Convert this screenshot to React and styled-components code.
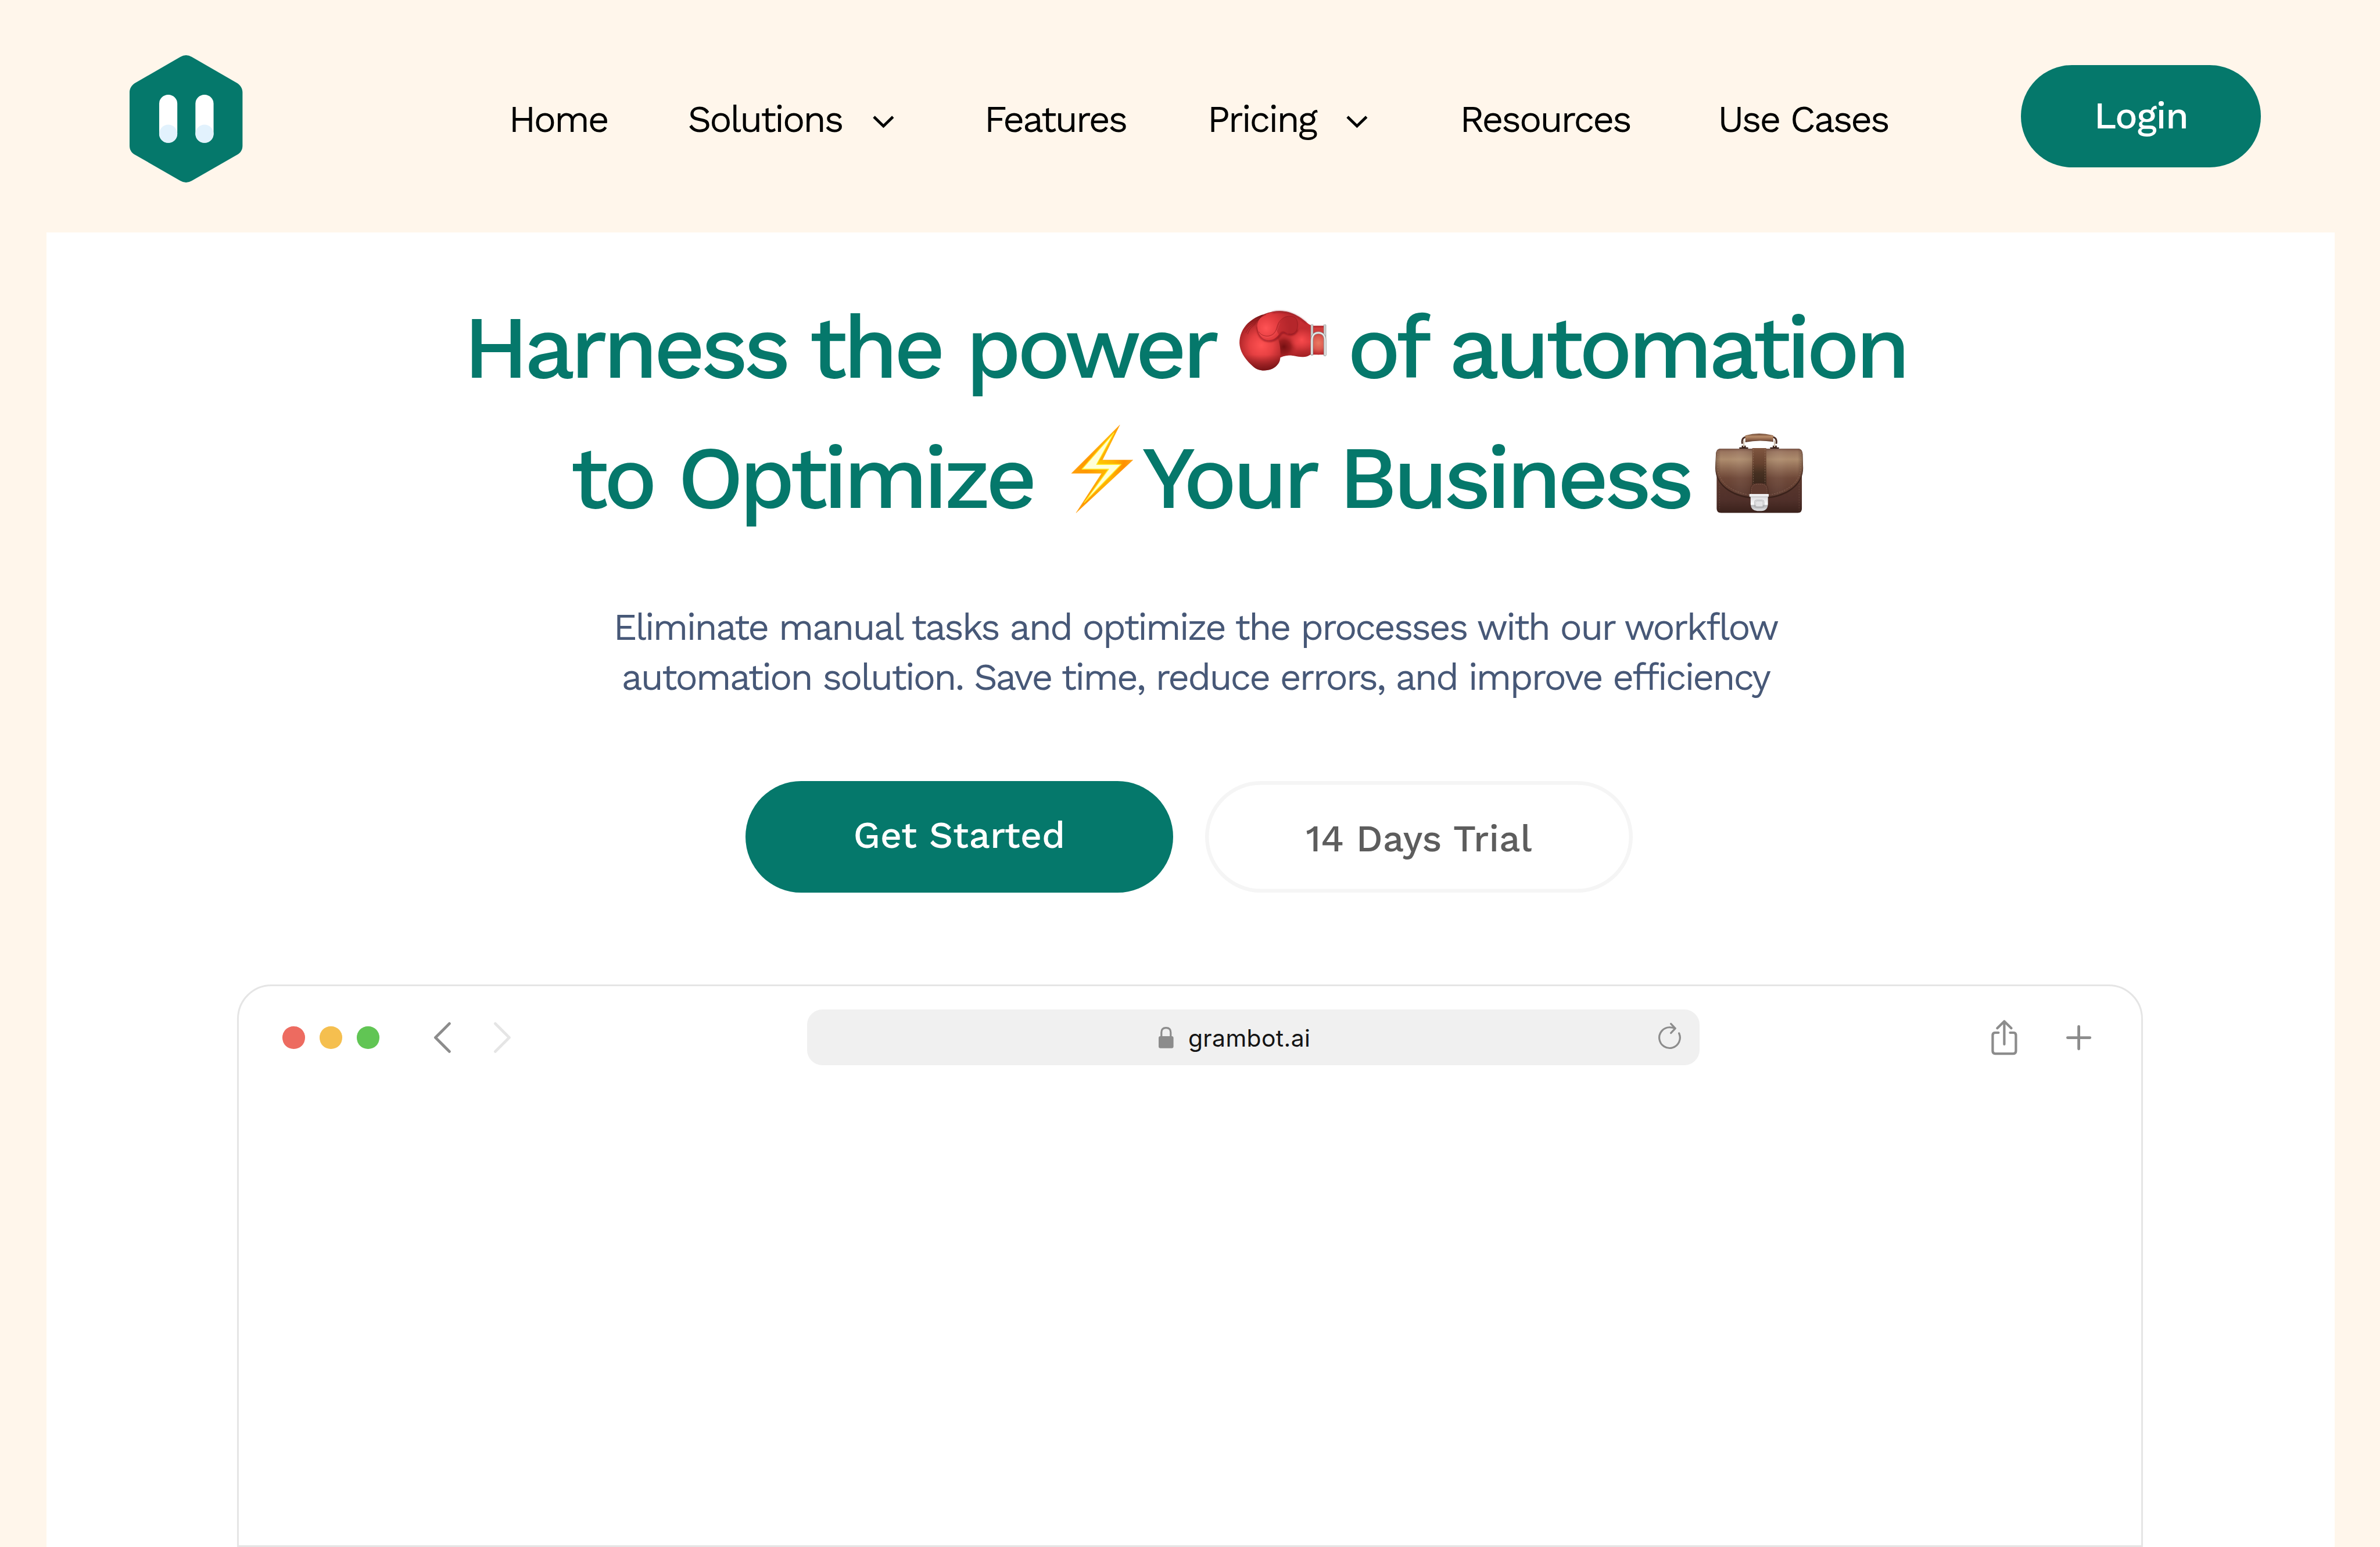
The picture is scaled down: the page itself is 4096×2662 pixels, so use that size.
import React from "react";
import styled, { createGlobalStyle } from "styled-components";

/* The design is drawn on a 5120px artboard and rendered at 80%. */
const u = (n) => `${+(n * 0.8).toFixed(2)}px`;

const color = {
  green: "#05786b",
  cream: "#fff6eb",
  slate: "#475877",
  icon: "#8c8c8c",
  line: "#e5e5e5",
};

const GlobalStyle = createGlobalStyle`
  *, *::before, *::after { box-sizing: border-box; }
  html, body { margin: 0; padding: 0; }
  body {
    background: ${color.cream};
    font-family: "Work Sans", Inter, "Liberation Sans", sans-serif;
    overflow: hidden;
  }
  svg { display: block; flex: none; overflow: visible; }
`;

const Page = styled.div`
  display: flex;
  flex-direction: column;
  width: ${u(5120)};
  height: 2662px;
  background: ${color.cream};
  overflow: hidden;
`;

const Header = styled.header`
  display: flex;
  flex: none;
  align-items: flex-start;
  height: ${u(500)};
  padding: ${u(119)} ${u(256)} 0 ${u(278.7)};
`;

const LogoLink = styled.a`
  display: block;
  flex: none;
  width: ${u(243)};
  height: ${u(274)};
`;

const Nav = styled.nav`
  display: grid;
  grid-template-columns: ${u(385)} ${u(638)} ${u(480)} ${u(543)} ${u(555)} auto;
  margin: ${u(87.5)} 0 0 ${u(572.6)};
`;

const NavLink = styled.a`
  display: flex;
  align-items: center;
  gap: ${u(66)};
  color: #000;
  font-size: ${u(80)};
  line-height: ${u(100)};
  letter-spacing: -0.049em;
  white-space: nowrap;

  svg { margin-top: ${u(11)}; }
`;

const LoginButton = styled.button`
  flex: none;
  width: ${u(516)};
  height: ${u(220)};
  margin: ${u(21)} 0 0 auto;
  padding: 0 0 ${u(3)};
  border: 0;
  border-radius: ${u(110)};
  background: ${color.green};
  color: #fff;
  font: 500 ${u(80)} / 1 "Work Sans", Inter, sans-serif;
  letter-spacing: -0.018em;
`;

const Panel = styled.main`
  display: flex;
  flex: 1;
  flex-direction: column;
  align-items: center;
  min-height: 0;
  margin: 0 ${u(97.5)} 0 ${u(100)};
  padding: ${u(106)} ${u(2.5)} 0 0;
  background: #fff;
`;

const Headline = styled.h1`
  display: flex;
  flex-direction: column;
  align-self: stretch;
  margin: 0;
  color: ${color.green};
  font-size: ${u(192)};
  font-weight: 500;
  line-height: ${u(280)};
  letter-spacing: -0.05em;
`;

const HeadlineRow = styled.span`
  display: grid;
  grid-template-columns: ${(p) => p.$columns.map(u).join(" ")} auto;
  height: ${u(280)};
  padding-left: ${(p) => u(p.$indent)};
  white-space: nowrap;
`;

const Emoji = styled.span`
  display: block;
  padding-top: ${(p) => u(p.$drop)};
`;

const Lead = styled.p`
  margin: ${u(128.5)} 0 0 ${u(23)};
  color: ${color.slate};
  font-size: ${u(80)};
  line-height: ${u(108)};
  letter-spacing: -0.049em;
  text-align: center;
  white-space: nowrap;
`;

const Actions = styled.div`
  display: flex;
  gap: ${u(69)};
  margin: ${u(169.5)} ${u(4)} 0 0;
`;

const ActionButton = styled.button`
  width: ${u(920)};
  height: ${u(240)};
  padding: ${(p) => (p.$outline ? `${u(8)} 0 0` : `0 0 ${u(8)}`)};
  border: 0;
  border-radius: ${u(120)};
  background: ${(p) => (p.$outline ? "#fff" : color.green)};
  box-shadow: ${(p) => (p.$outline ? `inset 0 0 0 ${u(8)} #f5f5f5` : "none")};
  color: ${(p) => (p.$outline ? "#5d5d5d" : "#fff")};
  font: 500 ${u(80)} / 1 "Work Sans", Inter, sans-serif;
`;

const Browser = styled.section`
  flex: 1;
  width: ${u(4100)};
  margin-top: ${u(198)};
  border: ${u(4)} solid ${color.line};
  border-radius: ${u(74)} ${u(74)} 0 0;
  background: #fff;
`;

const Toolbar = styled.div`
  display: flex;
  align-items: center;
  height: ${u(220)};
  padding: 0 ${u(107)} 0 ${u(94)};
`;

const Lights = styled.div`
  display: flex;
  gap: ${u(32)};
`;

const Light = styled.i`
  width: ${u(48)};
  height: ${u(48)};
  border-radius: 50%;
  background: ${(p) => p.$tone};
`;

const History = styled.div`
  display: flex;
  gap: ${u(92)};
  margin-left: ${u(118.5)};
`;

const AddressBar = styled.div`
  display: flex;
  align-items: center;
  width: ${u(1920)};
  height: ${u(120)};
  margin-left: ${u(638)};
  padding: 0 ${u(40)} 0 ${u(756)};
  border-radius: ${u(33)};
  background: #f0f0f0;
`;

const Address = styled.span`
  margin-left: ${u(32)};
  padding-top: ${u(3)};
  color: #141414;
  font: 400 ${u(51)} / 1.2 Inter, "Liberation Sans", sans-serif;
  letter-spacing: ${u(0.5)};
`;

const ReloadSlot = styled.span`
  margin: 0 0 ${u(8)} auto;
`;

const Tools = styled.div`
  display: flex;
  align-items: center;
  gap: ${u(105)};
  margin-left: auto;
`;

function Logo() {
  return (
    <svg width={u(243)} height={u(274)} viewBox="0 0 243 274">
      <path
        fill={color.green}
        d="M109 3.7Q121.5-3.7 134 3.7L232 60.3C239 65 243 72 243 80V195C243 203 239 210 232 213.7L134 270Q121.5 277.4 109 270L11 213.7C4 210 0 203 0 195V80C0 72 4 65 11 60.3Z"
      />
      <rect x="63.7" y="85" width="39" height="103.6" rx="19.5" fill="#fff" />
      <rect x="141.7" y="85" width="39" height="103.6" rx="19.5" fill="#fff" />
      <circle cx="83.2" cy="169" r="19.5" fill="#e2f2fd" />
      <circle cx="161.2" cy="169" r="19.5" fill="#e2f2fd" />
    </svg>
  );
}

function ChevronDown() {
  return (
    <svg width={u(46)} height={u(27)} viewBox="0 0 46 27">
      <path d="M2.5 2.5 23 22.5 43.5 2.5" fill="none" stroke="#000" strokeWidth="6" />
    </svg>
  );
}

function Glove() {
  return (
    <svg width={u(187.7)} height={u(129)} viewBox="78 88 563 387">
      <defs>
        <radialGradient id="gFist" gradientUnits="userSpaceOnUse" cx="220" cy="310" r="190">
          <stop offset="0" stopColor="#ff5252" />
          <stop offset=".4" stopColor="#e64042" />
          <stop offset=".75" stopColor="#b3282b" />
          <stop offset="1" stopColor="#7d1719" />
        </radialGradient>
        <linearGradient id="gFistBase" gradientUnits="userSpaceOnUse" x1="0" y1="370" x2="0" y2="475">
          <stop offset="0" stopColor="#6d1013" stopOpacity="0" />
          <stop offset="1" stopColor="#6d1013" stopOpacity=".75" />
        </linearGradient>
        <linearGradient id="gHand" gradientUnits="userSpaceOnUse" x1="400" y1="90" x2="430" y2="390">
          <stop offset="0" stopColor="#8f1c20" />
          <stop offset=".14" stopColor="#cb2f33" />
          <stop offset=".4" stopColor="#c22c30" />
          <stop offset=".7" stopColor="#df3b3e" />
          <stop offset="1" stopColor="#a12023" />
        </linearGradient>
        <radialGradient id="gThumb" gradientUnits="userSpaceOnUse" cx="250" cy="200" r="150">
          <stop offset="0" stopColor="#ff5355" />
          <stop offset=".55" stopColor="#e13b3e" />
          <stop offset="1" stopColor="#c02d31" />
        </radialGradient>
        <radialGradient id="gPalm" gradientUnits="userSpaceOnUse" cx="365" cy="320" r="85">
          <stop offset="0" stopColor="#740f11" />
          <stop offset=".5" stopColor="#8c1719" stopOpacity=".8" />
          <stop offset="1" stopColor="#b3272b" stopOpacity="0" />
        </radialGradient>
        <radialGradient id="gHeel" gradientUnits="userSpaceOnUse" cx="480" cy="275" r="75">
          <stop offset="0" stopColor="#fa4b4d" />
          <stop offset="1" stopColor="#e33e41" stopOpacity="0" />
        </radialGradient>
        <radialGradient id="gCuff" gradientUnits="userSpaceOnUse" cx="588" cy="295" r="75">
          <stop offset="0" stopColor="#ea7a62" />
          <stop offset=".55" stopColor="#dc5a50" />
          <stop offset="1" stopColor="#b8272b" />
        </radialGradient>
        <linearGradient id="gTrim" x1="0" x2="1" y1="0" y2="0">
          <stop offset="0" stopColor="#8d8f8e" />
          <stop offset=".5" stopColor="#e6e8e7" />
          <stop offset="1" stopColor="#8d8f8e" />
        </linearGradient>
        <filter id="gSoft" x="-30%" y="-30%" width="160%" height="160%">
          <feGaussianBlur stdDeviation="5" />
        </filter>
      </defs>
      <path
        fill="url(#gHand)"
        d="M240 108C300 84 360 84 410 101C445 112 480 134 506 157C520 169 533 178 546 182V366C530 372 522 384 500 384C450 389 420 370 390 376C370 377 355 383 343 389L250 300Z"
      />
      <path fill="url(#gPalm)" d="M300 240H460V383C430 384 420 370 390 376C370 377 355 383 343 389L290 320Z" />
      <circle cx="480" cy="275" r="75" fill="url(#gHeel)" />
      <path
        fill="url(#gFist)"
        d="M262 105C205 111 150 146 120 181C88 219 74 268 80 312C88 365 125 410 165 445C190 470 225 476 262 470C300 464 330 438 339 408C347 380 344 300 325 262L280 170Z"
      />
      <path
        fill="url(#gFistBase)"
        d="M102 370C118 402 143 426 165 445C190 470 225 476 262 470C300 464 330 438 339 408C342 396 343 384 343 370Z"
      />
      <path
        d="M196 190C196 240 218 278 262 282C300 285 322 268 340 244C352 226 362 222 380 234C410 250 440 240 452 208"
        fill="none"
        stroke="#66090c"
        strokeOpacity=".6"
        strokeWidth="10"
        filter="url(#gSoft)"
      />
      <path
        fill="url(#gThumb)"
        d="M262 104C220 115 195 148 193 184C194 220 208 262 250 274C290 282 318 262 333 238C345 216 360 212 380 228C408 246 438 238 449 212C462 180 480 160 462 130C445 115 430 108 410 101C360 84 300 88 262 104Z"
      />
      <path
        d="M318 215C322 180 342 140 376 127C402 120 432 124 444 140C456 156 458 186 448 210C438 236 412 246 384 231C362 216 346 214 332 240Z"
        fill="#a92025"
        fillOpacity=".5"
      />
      <path
        d="M203 222C218 250 262 260 292 240C322 218 316 188 334 160C352 134 378 122 404 122C430 124 442 132 448 146C456 166 456 192 448 210C438 232 418 242 396 236"
        fill="none"
        stroke="#861619"
        strokeOpacity=".75"
        strokeWidth="3"
      />
      <path
        d="M206 232C228 262 270 266 300 246C326 222 324 194 340 166"
        fill="none"
        stroke="#ff7a7a"
        strokeOpacity=".35"
        strokeWidth="2.5"
      />
      <g fill="none" stroke="#6d1013" strokeOpacity=".5" strokeWidth="3.5" strokeLinecap="round">
        <path d="M250 112C215 128 200 142 192 152" />
        <path d="M192 151C170 150 150 160 132 172" />
        <path d="M188 158C160 166 130 182 112 208" />
        <path d="M184 166C155 180 132 200 120 228" />
        <path d="M180 174C150 196 138 214 132 236" />
      </g>
      <path
        d="M290 98C330 90 376 92 412 106C450 118 486 146 510 166"
        fill="none"
        stroke="#7c191d"
        strokeOpacity=".6"
        strokeWidth="9"
        filter="url(#gSoft)"
      />
      <path fill="#b5262a" d="M550 184H628V370H550Z" />
      <path fill="#cf3d3c" d="M556 194H622V226H556Z" />
      <path fill="url(#gCuff)" d="M553 366V275C555 240 570 232 588 232C608 232 622 244 624 275V366Q588 374 553 366Z" />
      <rect x="538" y="172" width="17" height="206" rx="8" fill="url(#gTrim)" />
      <rect x="621" y="173" width="17" height="208" rx="8" fill="url(#gTrim)" />
      <path
        d="M546 366V280C546 242 566 229 588 229C612 229 631 244 631 280V372"
        fill="none"
        stroke="#9a9c9b"
        strokeWidth="16"
        strokeLinecap="round"
      />
      <path
        d="M546 366V280C546 242 566 229 588 229C612 229 631 244 631 280V372"
        fill="none"
        stroke="#eceeed"
        strokeWidth="9"
        strokeLinecap="round"
      />
    </svg>
  );
}

function Bolt() {
  return (
    <svg width={u(132.3)} height={u(189.3)} viewBox="76 43 397 568">
      <defs>
        <linearGradient id="bEdge" gradientUnits="userSpaceOnUse" x1="76" y1="0" x2="473" y2="0">
          <stop offset="0" stopColor="#ffa00a" />
          <stop offset=".25" stopColor="#ff9800" />
          <stop offset=".5" stopColor="#ffb000" />
          <stop offset=".62" stopColor="#ffb400" />
          <stop offset=".85" stopColor="#ff8f00" />
          <stop offset="1" stopColor="#ffa61a" />
        </linearGradient>
        <linearGradient id="bStep" gradientUnits="userSpaceOnUse" x1="240" y1="0" x2="450" y2="0">
          <stop offset="0" stopColor="#ffc800" />
          <stop offset=".5" stopColor="#ffb400" />
          <stop offset="1" stopColor="#ff8f00" stopOpacity="0" />
        </linearGradient>
      </defs>
      <path
        d="M388 44 276 270H473L106 611 271 356H76Z"
        fill="url(#bEdge)"
        stroke="#ffa51c"
        strokeWidth="2"
        strokeLinejoin="round"
      />
      <path d="M262 272 236 300H400L430 274Z" fill="url(#bStep)" />
      <path
        d="M350 95 238 299H396L158 545 316 329H144Z"
        fill="#ffffd9"
        stroke="#ffef2a"
        strokeWidth="5"
        strokeLinejoin="round"
      />
    </svg>
  );
}

function Briefcase() {
  return (
    <svg width={u(189)} height={u(170.7)} viewBox="91 68 567 512">
      <defs>
        <linearGradient id="cBody" x1="0" x2="0" y1="0" y2="1">
          <stop offset="0" stopColor="#5f3b2f" />
          <stop offset=".7" stopColor="#50302a" />
          <stop offset="1" stopColor="#3a211b" />
        </linearGradient>
        <linearGradient id="cFlap" x1="0" x2="0" y1="0" y2="1">
          <stop offset="0" stopColor="#7d5647" />
          <stop offset=".06" stopColor="#9a755f" />
          <stop offset=".22" stopColor="#ae8c6d" />
          <stop offset=".4" stopColor="#8f6a53" />
          <stop offset=".6" stopColor="#6f4838" />
          <stop offset="1" stopColor="#57352b" />
        </linearGradient>
        <linearGradient id="cShade" x1="0" x2="1" y1="0" y2="0">
          <stop offset="0" stopColor="#2c1510" stopOpacity=".3" />
          <stop offset=".06" stopColor="#2c1510" stopOpacity="0" />
          <stop offset=".25" stopColor="#fff" stopOpacity=".04" />
          <stop offset=".42" stopColor="#2c1510" stopOpacity=".12" />
          <stop offset=".58" stopColor="#2c1510" stopOpacity=".12" />
          <stop offset=".75" stopColor="#fff" stopOpacity=".04" />
          <stop offset=".94" stopColor="#2c1510" stopOpacity="0" />
          <stop offset="1" stopColor="#2c1510" stopOpacity=".3" />
        </linearGradient>
        <linearGradient id="cStrap" x1="0" x2="0" y1="0" y2="1">
          <stop offset="0" stopColor="#805640" />
          <stop offset=".4" stopColor="#66422f" />
          <stop offset=".65" stopColor="#463021" />
          <stop offset="1" stopColor="#38251b" />
        </linearGradient>
        <linearGradient id="cGrip" x1="0" x2="0" y1="0" y2="1">
          <stop offset="0" stopColor="#6b4634" />
          <stop offset=".35" stopColor="#b98d6a" />
          <stop offset=".7" stopColor="#8b6048" />
          <stop offset="1" stopColor="#4f3024" />
        </linearGradient>
        <linearGradient id="cLock" x1="0" x2="0" y1="0" y2="1">
          <stop offset="0" stopColor="#dcdcde" />
          <stop offset=".55" stopColor="#fbfbfc" />
          <stop offset=".62" stopColor="#b4b5b8" />
          <stop offset="1" stopColor="#e4e4e6" />
        </linearGradient>
      </defs>
      <path d="M246 157H303V166H246ZM445 157H502V166H445Z" fill="#3c241d" />
      <path d="M262 146H288V160H262ZM462 146H488V160H462Z" fill="#3c241d" />
      <path d="M290 90C268 92 260 112 266 134M460 90C482 92 490 112 484 134" fill="none" stroke="#4d3027" strokeWidth="11" />
      <path d="M275 116V150M474 116V150" stroke="#cdbfae" strokeWidth="9" strokeLinecap="round" />
      <path d="M285 80Q375 56 465 80V122Q375 106 285 124Z" fill="url(#cGrip)" />
      <path d="M297 80V120M453 80V120" stroke="#c7a182" strokeOpacity=".6" strokeWidth="2" strokeDasharray="6 5" />
      <path d="M100 300H650V552Q650 580 624 580H128Q100 580 100 552Z" fill="url(#cBody)" />
      <path d="M118 390V565M632 390V565" stroke="#8a6657" strokeOpacity=".55" strokeWidth="3" strokeDasharray="9 8" />
      <path
        d="M120 166H630Q652 168 655 200L658 290C658 410 540 490 375 490C210 490 91 410 91 290L95 200Q98 168 120 166Z"
        fill="#3a221b"
      />
      <path
        d="M120 166H630Q652 168 654 200L656 285C654 400 540 480 375 480C210 480 95 400 93 285L96 200Q98 168 120 166Z"
        fill="url(#cFlap)"
      />
      <path
        d="M120 166H630Q652 168 654 200L656 285C654 400 540 480 375 480C210 480 95 400 93 285L96 200Q98 168 120 166Z"
        fill="url(#cShade)"
      />
      <path
        d="M108 180V300C114 395 225 468 375 468C525 468 636 395 642 300V180"
        fill="none"
        stroke="#a88670"
        strokeOpacity=".65"
        strokeWidth="3"
        strokeDasharray="9 8"
      />
      <path d="M330 162H420V410H330Z" fill="url(#cStrap)" />
      <path d="M337 168V400M412 168V400" stroke="#a78570" strokeOpacity=".75" strokeWidth="3" strokeDasharray="9 8" />
      <path d="M318 462V430Q320 390 360 388H390Q428 390 431 430V462Z" fill="#5f3b30" stroke="#3a221b" strokeWidth="2" />
      <path
        d="M324 458V432Q326 397 360 395H390Q424 397 425 432V458"
        fill="none"
        stroke="#a78570"
        strokeOpacity=".6"
        strokeWidth="2.5"
        strokeDasharray="7 6"
      />
      <path d="M319 474H431V525Q428 568 388 568H362Q322 566 319 525Z" fill="url(#cLock)" />
      <rect x="311" y="458" width="125" height="18" rx="3" fill="#eeeeef" />
      <path d="M313 477H434" stroke="#9c9c9f" strokeWidth="2" />
      <rect x="344" y="497" width="62" height="50" rx="14" fill="none" stroke="#97989b" strokeWidth="2.5" />
      <rect x="351" y="503" width="48" height="37" rx="9" fill="#e3e3e5" stroke="#97989b" strokeWidth="2" />
    </svg>
  );
}

function HistoryArrow({ forward }) {
  return (
    <svg width={u(36)} height={u(66)} viewBox="0 0 36 66">
      <path
        d={forward ? "M3 3 33 33 3 63" : "M33 3 3 33 33 63"}
        fill="none"
        stroke={forward ? color.line : color.icon}
        strokeWidth="6"
        strokeLinecap="round"
        strokeLinejoin="round"
      />
    </svg>
  );
}

function Padlock() {
  return (
    <svg width={u(32)} height={u(46)} viewBox="0 0 32 46">
      <rect y="20" width="32" height="26" rx="4" fill={color.icon} />
      <path d="M6 21V12Q6 2 16 2T26 12V21" fill="none" stroke={color.icon} strokeWidth="4" />
    </svg>
  );
}

function Reload() {
  return (
    <svg width={u(49)} height={u(56)} viewBox="0 0 49 56">
      <g fill="none" stroke={color.icon} strokeWidth="4" strokeLinecap="round" strokeLinejoin="round">
        <path d="M44.5 22.5A22.3 22.3 0 1 1 24.5 9.7Q30 9.7 36 12" />
        <path d="M27 2 36.5 12 27 22" />
      </g>
    </svg>
  );
}

function Share() {
  return (
    <svg width={u(56)} height={u(76)} viewBox="0 0 56 76">
      <g fill="none" stroke={color.icon} strokeWidth="5.3" strokeLinecap="round" strokeLinejoin="round">
        <path d="M15.5 27.5H8.5Q3 27.5 3 33V67Q3 72.6 8.5 72.6H47.5Q53 72.6 53 67V33Q53 27.5 47.5 27.5H40.5" />
        <path d="M28 3V52.5M13 17.8 28 3 43 17.8" />
      </g>
    </svg>
  );
}

function Plus() {
  return (
    <svg width={u(54)} height={u(54)} viewBox="0 0 54 54">
      <path d="M27 3V51M3 27H51" stroke={color.icon} strokeWidth="6" strokeLinecap="round" />
    </svg>
  );
}

const links = [
  { label: "Home" },
  { label: "Solutions", menu: true },
  { label: "Features" },
  { label: "Pricing", menu: true },
  { label: "Resources" },
  { label: "Use Cases" },
];

export default function App() {
  return (
    <Page>
      <GlobalStyle />
      <Header>
        <LogoLink>
          <Logo />
        </LogoLink>
        <Nav>
          {links.map(({ label, menu }) => (
            <NavLink key={label}>
              {label}
              {menu && <ChevronDown />}
            </NavLink>
          ))}
        </Nav>
        <LoginButton>Login</LoginButton>
      </Header>
      <Panel>
        <Headline>
          <HeadlineRow $indent={896.7} $columns={[1669.3, 232.4]}>
            <span>Harness the power</span>
            <Emoji $drop={63}>
              <Glove />
            </Emoji>
            <span>of automation</span>
          </HeadlineRow>
          <HeadlineRow $indent={1127.4} $columns={[1077.6, 152, 1233]}>
            <span>to Optimize</span>
            <Emoji $drop={28}>
              <Bolt />
            </Emoji>
            <span>Your Business</span>
            <Emoji $drop={46.7}>
              <Briefcase />
            </Emoji>
          </HeadlineRow>
        </Headline>
        <Lead>
          Eliminate manual tasks and optimize the processes with our workflow
          <br />
          automation solution. Save time, reduce errors, and improve efficiency
        </Lead>
        <Actions>
          <ActionButton>Get Started</ActionButton>
          <ActionButton $outline>14 Days Trial</ActionButton>
        </Actions>
        <Browser>
          <Toolbar>
            <Lights>
              <Light $tone="#ed6b60" />
              <Light $tone="#f5bf4f" />
              <Light $tone="#61c554" />
            </Lights>
            <History>
              <HistoryArrow />
              <HistoryArrow forward />
            </History>
            <AddressBar>
              <Padlock />
              <Address>grambot.ai</Address>
              <ReloadSlot>
                <Reload />
              </ReloadSlot>
            </AddressBar>
            <Tools>
              <Share />
              <Plus />
            </Tools>
          </Toolbar>
        </Browser>
      </Panel>
    </Page>
  );
}
